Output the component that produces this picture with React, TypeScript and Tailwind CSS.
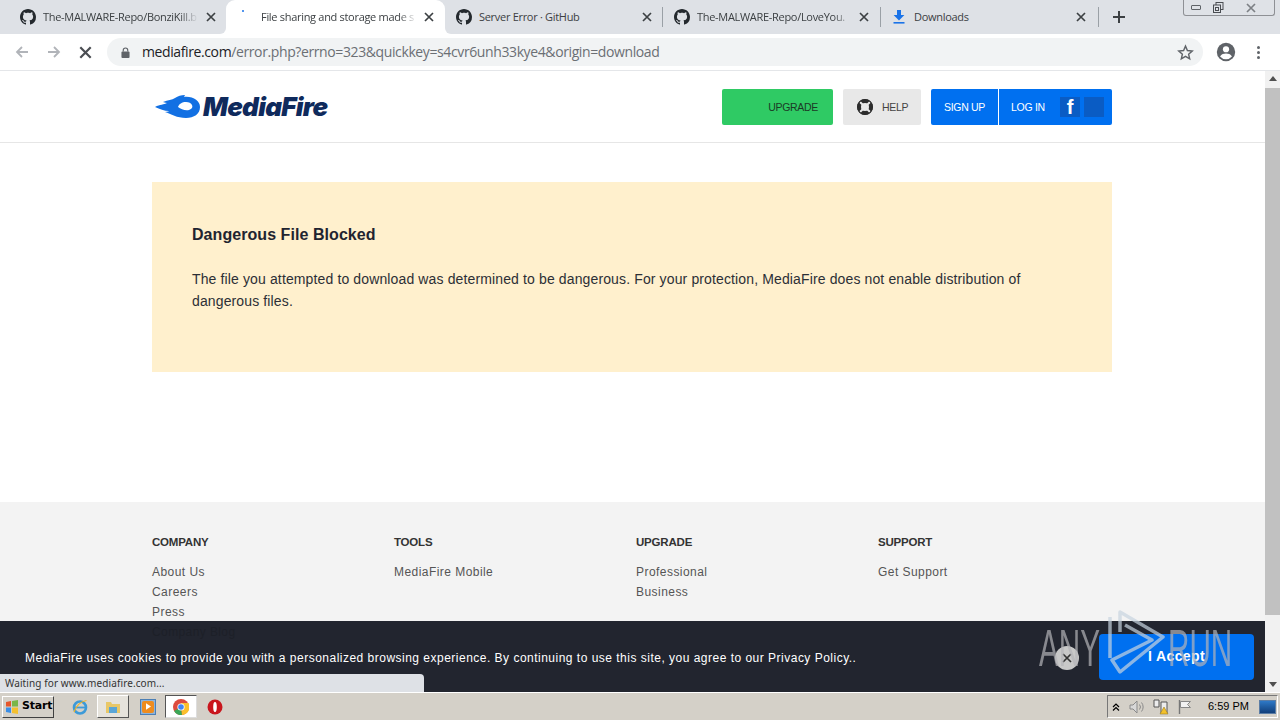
import React from "react";

const Gh = () => (
  <svg viewBox="0 0 16 16" className="w-[16px] h-[16px] shrink-0" fill="#24292e">
    <path d="M8 0C3.58 0 0 3.58 0 8c0 3.54 2.29 6.53 5.47 7.59.4.07.55-.17.55-.38 0-.19-.01-.82-.01-1.49-2.01.37-2.53-.49-2.69-.94-.09-.23-.48-.94-.82-1.13-.28-.15-.68-.52-.01-.53.63-.01 1.08.58 1.23.82.72 1.21 1.87.87 2.33.66.07-.52.28-.87.51-1.07-1.78-.2-3.64-.89-3.64-3.95 0-.87.31-1.59.82-2.15-.08-.2-.36-1.02.08-2.12 0 0 .67-.21 2.2.82.64-.18 1.32-.27 2-.27s1.36.09 2 .27c1.53-1.04 2.2-.82 2.2-.82.44 1.1.16 1.92.08 2.12.51.56.82 1.27.82 2.15 0 3.07-1.87 3.75-3.65 3.95.29.25.54.73.54 1.48 0 1.07-.01 1.93-.01 2.2 0 .21.15.46.55.38A8.01 8.01 0 0 0 16 8c0-4.42-3.58-8-8-8z" />
  </svg>
);

const X = ({ c = "#3c4043", s = 10 }: { c?: string; s?: number }) => (
  <svg viewBox="0 0 10 10" width={s} height={s} className="shrink-0">
    <path d="M1 1l8 8M9 1l-8 8" stroke={c} strokeWidth="1.7" fill="none" />
  </svg>
);

const Sep = () => <div className="w-px h-[20px] bg-[#9aa0a6] shrink-0" />;

const fade = "[mask-image:linear-gradient(to_right,black_88%,transparent)]";

function Tabs() {
  const title = "block overflow-hidden whitespace-nowrap text-[11px] tracking-[-0.3px] text-[#3c4043] shrink-0";
  return (
    <div className="h-[34px] bg-[#dee1e6] flex items-center relative font-['Open_Sans','Liberation_Sans',sans-serif]">
      <div className="w-[226px] pl-[20px] flex items-center shrink-0">
        <Gh />
        <span className={`ml-[7px] w-[155px] ${title} ${fade}`}>The-MALWARE-Repo/BonziKill.b</span>
        <span className="ml-[8px]"><X /></span>
      </div>
      <div className="w-[219px] h-[34px] bg-white rounded-t-[9px] self-end flex items-center pl-[35px] shrink-0 relative">
        <div className="absolute left-[-6px] bottom-0 w-[6px] h-[6px] bg-white">
          <div className="w-full h-full bg-[#dee1e6] rounded-br-[6px]" />
        </div>
        <div className="absolute right-[-6px] bottom-0 w-[6px] h-[6px] bg-white">
          <div className="w-full h-full bg-[#dee1e6] rounded-bl-[6px]" />
        </div>
        <div className="absolute left-[16px] top-[10px] w-[2px] h-[2px] rounded-full bg-[#1a73e8]" />
        <span className={`w-[156px] ${title} ${fade}`}>File sharing and storage made s</span>
        <span className="ml-[7px]"><X /></span>
      </div>
      <div className="w-[217px] pl-[11px] flex items-center shrink-0">
        <Gh />
        <span className={`ml-[7px] w-[158px] ${title}`}>Server Error · GitHub</span>
        <span className="ml-[5px]"><X /></span>
      </div>
      <Sep />
      <div className="w-[217px] pl-[11px] flex items-center shrink-0">
        <Gh />
        <span className={`ml-[7px] w-[155px] ${title} ${fade}`}>The-MALWARE-Repo/LoveYou.</span>
        <span className="ml-[7px]"><X /></span>
      </div>
      <Sep />
      <div className="w-[217px] pl-[12px] flex items-center shrink-0">
        <svg viewBox="0 0 12 14" className="w-[12px] h-[14px] shrink-0">
          <path d="M4 0h4v5h3.4L6 10.4.6 5H4z" fill="#1a73e8" />
          <rect x="0.5" y="12" width="11" height="1.6" fill="#1a73e8" />
        </svg>
        <span className={`ml-[9px] w-[160px] ${title}`}>Downloads</span>
        <span className="ml-[2px]"><X /></span>
      </div>
      <Sep />
      <svg viewBox="0 0 12 12" className="w-[12px] h-[12px] ml-[14px] shrink-0">
        <path d="M6 0v12M0 6h12" stroke="#3c4043" strokeWidth="2" />
      </svg>
      <div className="absolute right-[5px] top-0 h-[16px] w-[92px] rounded-b-[3px] border border-t-0 border-[#8e9095] bg-[#dfe2e7] flex items-center">
        <div className="w-[24px] flex justify-center">
          <div className="w-[10px] h-[5px] border border-[#5f6368] rounded-[1px]" />
        </div>
        <div className="w-[20px] flex justify-center">
          <svg viewBox="0 0 11 11" className="w-[11px] h-[11px]">
            <rect x="3" y="0.5" width="7" height="7" fill="none" stroke="#4a4d52" />
            <rect x="0.5" y="3" width="7" height="7.5" fill="#dfe2e7" stroke="#4a4d52" />
            <rect x="2.5" y="5.5" width="3" height="3" fill="none" stroke="#4a4d52" />
          </svg>
        </div>
        <div className="flex-1 flex justify-center">
          <X c="#7d8085" s={10} />
        </div>
      </div>
    </div>
  );
}

function Toolbar() {
  return (
    <div className="h-[37px] bg-white flex items-center border-b border-[#e4e6e9] relative font-['Open_Sans','Liberation_Sans',sans-serif]">
      <svg viewBox="0 0 16 16" className="w-[16px] h-[16px] ml-[14px] shrink-0">
        <path d="M14 8H3M8 3L3 8l5 5" fill="none" stroke="#b1b4b9" strokeWidth="1.8" />
      </svg>
      <svg viewBox="0 0 16 16" className="w-[16px] h-[16px] ml-[16px] shrink-0">
        <path d="M2 8h11M8 3l5 5-5 5" fill="none" stroke="#b1b4b9" strokeWidth="1.8" />
      </svg>
      <span className="ml-[17px]"><X c="#4a4d52" s={13} /></span>
      <div className="ml-[15px] w-[1096px] h-[28px] bg-[#f1f3f4] rounded-full flex items-center pl-[14px] shrink-0">
        <svg viewBox="0 0 10 12" className="w-[9px] h-[11px] shrink-0">
          <rect x="0.5" y="5" width="9" height="7" rx="1" fill="#5f6368" />
          <path d="M2.5 5V3.5a2.5 2.5 0 0 1 5 0V5" fill="none" stroke="#5f6368" strokeWidth="1.3" />
        </svg>
        <span className="ml-[12px] mb-[2px] text-[14px] tracking-[-0.39px] whitespace-nowrap text-[#202124]">
          mediafire.com<span className="text-[#6b6f74]">/error.php?errno=323&amp;quickkey=s4cvr6unh33kye4&amp;origin=download</span>
        </span>
        <svg viewBox="0 0 24 24" className="w-[17px] h-[17px] ml-auto mr-[9px] shrink-0">
          <path d="M12 3l2.7 6.2 6.8.6-5.1 4.5 1.500 6.700-5.900-3.500-5.900 3.500 1.500-6.700L2.500 9.800l6.800-.6z" fill="none" stroke="#5f6368" strokeWidth="2" />
        </svg>
      </div>
      <svg viewBox="0 0 24 24" className="w-[22px] h-[22px] ml-[12px] shrink-0">
        <circle cx="12" cy="12" r="10" fill="#5f6368" />
        <circle cx="12" cy="9" r="3.4" fill="#fff" />
        <path d="M5.500 17c1.500-2.600 4-3.300 6.500-3.300s5 .7 6.500 3.300a8.500 8.500 0 0 1-13 0z" fill="#fff" />
      </svg>
      <div className="ml-[20px] flex flex-col gap-[2px]">
        <div className="w-[3px] h-[3px] rounded-full bg-[#5f6368]" />
        <div className="w-[3px] h-[3px] rounded-full bg-[#5f6368]" />
        <div className="w-[3px] h-[3px] rounded-full bg-[#5f6368]" />
      </div>
    </div>
  );
}

function Logo() {
  return (
    <div className="flex items-center">
      <svg viewBox="0 0 46 26" className="w-[46px] h-[26px] shrink-0">
        <path
          fillRule="evenodd"
          fill="#1270e3"
          d="M0 13C5 10 9 11 12 9 10 9 9 8 8 8 13 6 17 6 20 4 23 2 26 1 30 1L29 3C38 2 45 7 45 13 45 20 39 24 31 24 22 24 16 20 10 18 13 18 14 17 14 17 9 17 5 15 0 13zM31 8C27 8 24 10 23 13 26 15 30 17 34 16 37 15 38 13 37 11 36 9 34 8 31 8z"
        />
      </svg>
      <span className="ml-[2px] text-[26px] leading-none font-black italic tracking-[-0.7px] text-[#0f2a5c] font-['Inter','Liberation_Sans',sans-serif]">MediaFire</span>
    </div>
  );
}

function Header() {
  return (
    <div className="h-[72px] border-b border-[#e6e6e6] shrink-0 flex items-center pt-[1px]">
      <div className="w-[960px] ml-[152px] flex items-center justify-between">
        <div className="ml-[3px]"><Logo /></div>
        <div className="flex items-center text-[10.5px] tracking-[-0.3px]">
          <div className="w-[111px] h-[36px] bg-[#2fca64] rounded-[2px] flex items-center justify-end pr-[15px] pt-[2px] text-[#1c3a26]">UPGRADE</div>
          <div className="ml-[10px] w-[78px] h-[36px] bg-[#e8e8e8] rounded-[2px] flex items-center pl-[14px] text-[#444]">
            <svg viewBox="0 0 16 16" className="w-[16px] h-[16px] shrink-0">
              <circle cx="8" cy="8" r="6" fill="none" stroke="#2d2d2d" strokeWidth="4" />
              <path d="M3 3l3 3M13 3l-3 3M3 13l3-3M13 13l-3-3" stroke="#e8e8e8" strokeWidth="2" />
              <circle cx="8" cy="8" r="7.500" fill="none" stroke="#2d2d2d" />
            </svg>
            <span className="ml-[9px] mt-[1px]">HELP</span>
          </div>
          <div className="ml-[10px] w-[181px] h-[36px] bg-[#0070f0] rounded-[2px] flex items-center text-white">
            <div className="w-[67px] h-full flex items-center justify-center pt-[2px]">SIGN UP</div>
            <div className="w-px h-full bg-white" />
            <div className="ml-[12px] w-[37px] mt-[1px]">LOG IN</div>
            <div className="ml-[12px] w-[20px] h-[20px] bg-[#0a5cc4] flex items-center justify-center text-[20px] font-bold text-white font-['Liberation_Sans',sans-serif]">f</div>
            <div className="ml-[4px] w-[20px] h-[20px] bg-[#0a5cc4]" />
          </div>
        </div>
      </div>
    </div>
  );
}

const FootCol = ({ w, t, items }: { w: string; t: string; items: string[] }) => (
  <div className={`${w} shrink-0`}>
    <div className="text-[11.5px] tracking-[-0.2px] font-bold leading-[20px] text-[#333]">{t}</div>
    <div className="mt-[9.5px] text-[12px] tracking-[0.45px] leading-[20px] text-[#555]">
      {items.map((i) => <div key={i}>{i}</div>)}
    </div>
  </div>
);

function Page() {
  return (
    <div className="flex-1 min-w-0 bg-white flex flex-col font-['Liberation_Sans',sans-serif]">
      <Header />
      <div className="h-[359px] shrink-0 pt-[39px] pl-[152px]">
        <div className="w-[960px] h-[190px] bg-[#fff0cd] px-[40px] pt-[43px]">
          <div className="text-[16px] leading-[20px] tracking-[0.06px] font-bold text-[#1f2430]">Dangerous File Blocked</div>
          <p className="mt-[23px] text-[14px] leading-[22px] tracking-[0.13px] text-[#2c2f36]">
            The file you attempted to download was determined to be dangerous. For your protection, MediaFire does not enable distribution of dangerous files.
          </p>
        </div>
      </div>
      <div className="flex-1 bg-[#f3f3f3] pt-[30px] pl-[152px] flex">
        <FootCol w="w-[242px]" t="COMPANY" items={["About Us", "Careers", "Press", "Company Blog"]} />
        <FootCol w="w-[242px]" t="TOOLS" items={["MediaFire Mobile"]} />
        <FootCol w="w-[242px]" t="UPGRADE" items={["Professional", "Business"]} />
        <FootCol w="w-[200px]" t="SUPPORT" items={["Get Support"]} />
      </div>
    </div>
  );
}

function Scrollbar() {
  return (
    <div className="w-[15px] bg-[#f1f1f1] flex flex-col items-center shrink-0">
      <svg viewBox="0 0 8 5" className="w-[8px] h-[5px] mt-[5px]"><path d="M4 0l4 5H0z" fill="#505050" /></svg>
      <div className="w-[15px] h-[527px] bg-[#c1c1c1] mt-[7px]" />
      <svg viewBox="0 0 8 5" className="w-[8px] h-[5px] mt-auto mb-[5px]"><path d="M4 5L0 0h8z" fill="#505050" /></svg>
    </div>
  );
}

function Taskbar() {
  return (
    <div className="h-[28px] bg-[#d4d0c8] border-t border-white flex items-center relative font-['Liberation_Sans',sans-serif]">
      <div className="ml-[2px] w-[52px] h-[22px] bg-[#d4d0c8] border border-t-white border-l-white border-r-[#404040] border-b-[#404040] flex items-center pl-[2px] shrink-0">
        <svg viewBox="0 0 14 14" className="w-[14px] h-[14px] shrink-0">
          <path d="M1 2l5-1v5.500H1z" fill="#e5562a" />
          <path d="M7 1l6-1v6.500H7z" fill="#7ab648" />
          <path d="M1 7.500h5V13l-5-1z" fill="#3a8ee6" />
          <path d="M7 7.500h6V14l-6-1z" fill="#f4c02f" />
        </svg>
        <span className="ml-[3px] text-[11px] font-bold font-['DejaVu_Sans',sans-serif] tracking-[-0.2px] text-black">Start</span>
      </div>
      <svg viewBox="0 0 16 16" className="w-[16px] h-[16px] ml-[18px] shrink-0">
        <circle cx="8" cy="8.500" r="6" fill="none" stroke="#3d9ad8" strokeWidth="2.600" />
        <path d="M3 8.500h10" stroke="#3d9ad8" strokeWidth="1.800" />
        <path d="M2 13C4 7 9 2 14.500 1.500" fill="none" stroke="#f0b429" strokeWidth="1.200" />
      </svg>
      <div className="ml-[9px] w-[32px] h-[23px] bg-[#e6e3dc] border border-t-white border-l-white border-r-[#555] border-b-[#555] flex items-center justify-center shrink-0">
        <svg viewBox="0 0 16 15" className="w-[16px] h-[15px]">
          <path d="M1 3h5l1 2h8v9H1z" fill="#e8c767" />
          <rect x="4" y="8" width="8" height="6" fill="#5aa5d6" />
        </svg>
      </div>
      <div className="ml-[11px] w-[16px] h-[16px] bg-[#8db4dc] border border-[#4c7fb5] flex items-center justify-center shrink-0">
        <div className="w-[12px] h-[12px] bg-[#ee8c1f] rounded-[2px] flex items-center justify-center">
          <svg viewBox="0 0 6 8" className="w-[5px] h-[7px]"><path d="M0 0l6 4-6 4z" fill="#fff" /></svg>
        </div>
      </div>
      <div className="ml-[9px] w-[32px] h-[23px] bg-white border border-t-[#555] border-l-[#555] border-r-[#ddd] border-b-[#ddd] flex items-center justify-center shrink-0">
        <svg viewBox="0 0 16 16" className="w-[16px] h-[16px]">
          <circle cx="8" cy="8" r="8" fill="#dd4b3e" />
          <path d="M8 8L1.100 12a8 8 0 0 0 7.900 4z" fill="#3aa757" />
          <path d="M8 4h7.500a8 8 0 0 1-6.500 12z" fill="#fbc02d" />
          <circle cx="8" cy="8" r="3.600" fill="#fff" />
          <circle cx="8" cy="8" r="2.800" fill="#4285f4" />
        </svg>
      </div>
      <svg viewBox="0 0 16 16" className="w-[16px] h-[16px] ml-[10px] shrink-0">
        <circle cx="8" cy="8" r="7.500" fill="#c9161d" />
        <ellipse cx="8" cy="8" rx="1.800" ry="5" fill="#fff" />
      </svg>
      <div className="ml-auto mr-[2px] w-[171px] h-[23px] border border-t-[#777] border-l-[#777] border-r-white border-b-white flex items-center shrink-0">
        <svg viewBox="0 0 8 8" className="w-[8px] h-[8px] ml-[4px] shrink-0">
          <path d="M1 4l3-3 3 3M1 7.500l3-3 3 3" fill="none" stroke="#000" strokeWidth="1.200" />
        </svg>
        <svg viewBox="0 0 16 16" className="w-[16px] h-[16px] ml-[9px] shrink-0">
          <path d="M1 6h3l4-4v12l-4-4H1z" fill="#d8d8d8" stroke="#8a8a8a" />
          <path d="M10.500 5.500a4 4 0 0 1 0 5M12.500 3.500a7 7 0 0 1 0 9" fill="none" stroke="#8a8a8a" />
        </svg>
        <svg viewBox="0 0 16 16" className="w-[16px] h-[16px] ml-[8px] shrink-0">
          <path d="M1 1h5v7H1zM8 3h6v11H8z" fill="#ececec" stroke="#555" />
          <path d="M11 8l4 7H7z" fill="#f3c12b" stroke="#8a6d10" strokeWidth="0.500" />
        </svg>
        <svg viewBox="0 0 16 16" className="w-[16px] h-[16px] ml-[8px] shrink-0">
          <path d="M2.500 1v14" stroke="#777" strokeWidth="1.400" />
          <path d="M3.500 2.500h10l-3 3 3 3h-10z" fill="#f2f2f2" stroke="#888" />
        </svg>
        <span className="ml-[15px] text-[11px] text-black whitespace-nowrap">6:59 PM</span>
        <div className="ml-auto mr-[1px] w-[17px] h-[14px] bg-gradient-to-b from-[#2e79c7] to-[#123f7a] border border-[#5b7da5]" />
      </div>
    </div>
  );
}

export default function App() {
  return (
    <div className="w-[1280px] h-[720px] overflow-hidden flex flex-col bg-white relative">
      <Tabs />
      <Toolbar />
      <div className="h-[621px] flex overflow-hidden relative shrink-0">
        <Page />
        <Scrollbar />
        <div className="absolute left-0 right-[15px] bottom-0 h-[71px] bg-[#22252f] flex items-center justify-between pl-[25px] pr-[11px] font-['Liberation_Sans',sans-serif]">
          <div className="absolute left-[152px] top-[2px] text-[12px] tracking-[0.4px] text-[#1d2028]">Company Blog</div>
          <span className="text-[12px] tracking-[0.49px] text-white mt-[2px]">
            MediaFire uses cookies to provide you with a personalized browsing experience. By continuing to use this site, you agree to our Privacy Policy..
          </span>
          <div className="flex items-center">
            <div className="w-[24px] h-[24px] rounded-full bg-[#c8c8c8] flex items-center justify-center mr-[20px] mt-[3px]">
              <X c="#333" s={10} />
            </div>
            <div className="w-[155px] h-[46px] bg-[#0070f0] rounded-[4px] flex items-center justify-center text-[14px] font-bold tracking-[0.4px] text-white">I Accept</div>
          </div>
        </div>
        <div className="absolute left-0 bottom-0 w-[424px] h-[18px] bg-[#dee1e6] rounded-tr-[4px] flex items-center pl-[5px] text-[10px] tracking-[0.1px] text-[#333]">
          Waiting for www.mediafire.com...
        </div>
      </div>
      <Taskbar />
      <div className="absolute left-[1039px] top-[608px] w-[192px] h-[66px] flex items-center pointer-events-none text-[#b4b4b8]/70 font-['Liberation_Sans',sans-serif]">
        <span className="block w-[68px] text-[52px] leading-none scale-x-[0.57] origin-left whitespace-nowrap mt-[14px]">ANY</span>
        <svg viewBox="0 0 60 70" className="w-[60px] h-[70px] shrink-0 -mt-[4px] opacity-70">
          <path d="M3 13V54M13 28V8L56 33 13 68 5 56 45 36 18 21" fill="none" stroke="#c8d4e0" strokeWidth="3.500" strokeLinejoin="round" />
        </svg>
        <span className="block ml-[1px] text-[52px] leading-none scale-x-[0.57] origin-left whitespace-nowrap mt-[14px]">RUN</span>
      </div>
    </div>
  );
}
